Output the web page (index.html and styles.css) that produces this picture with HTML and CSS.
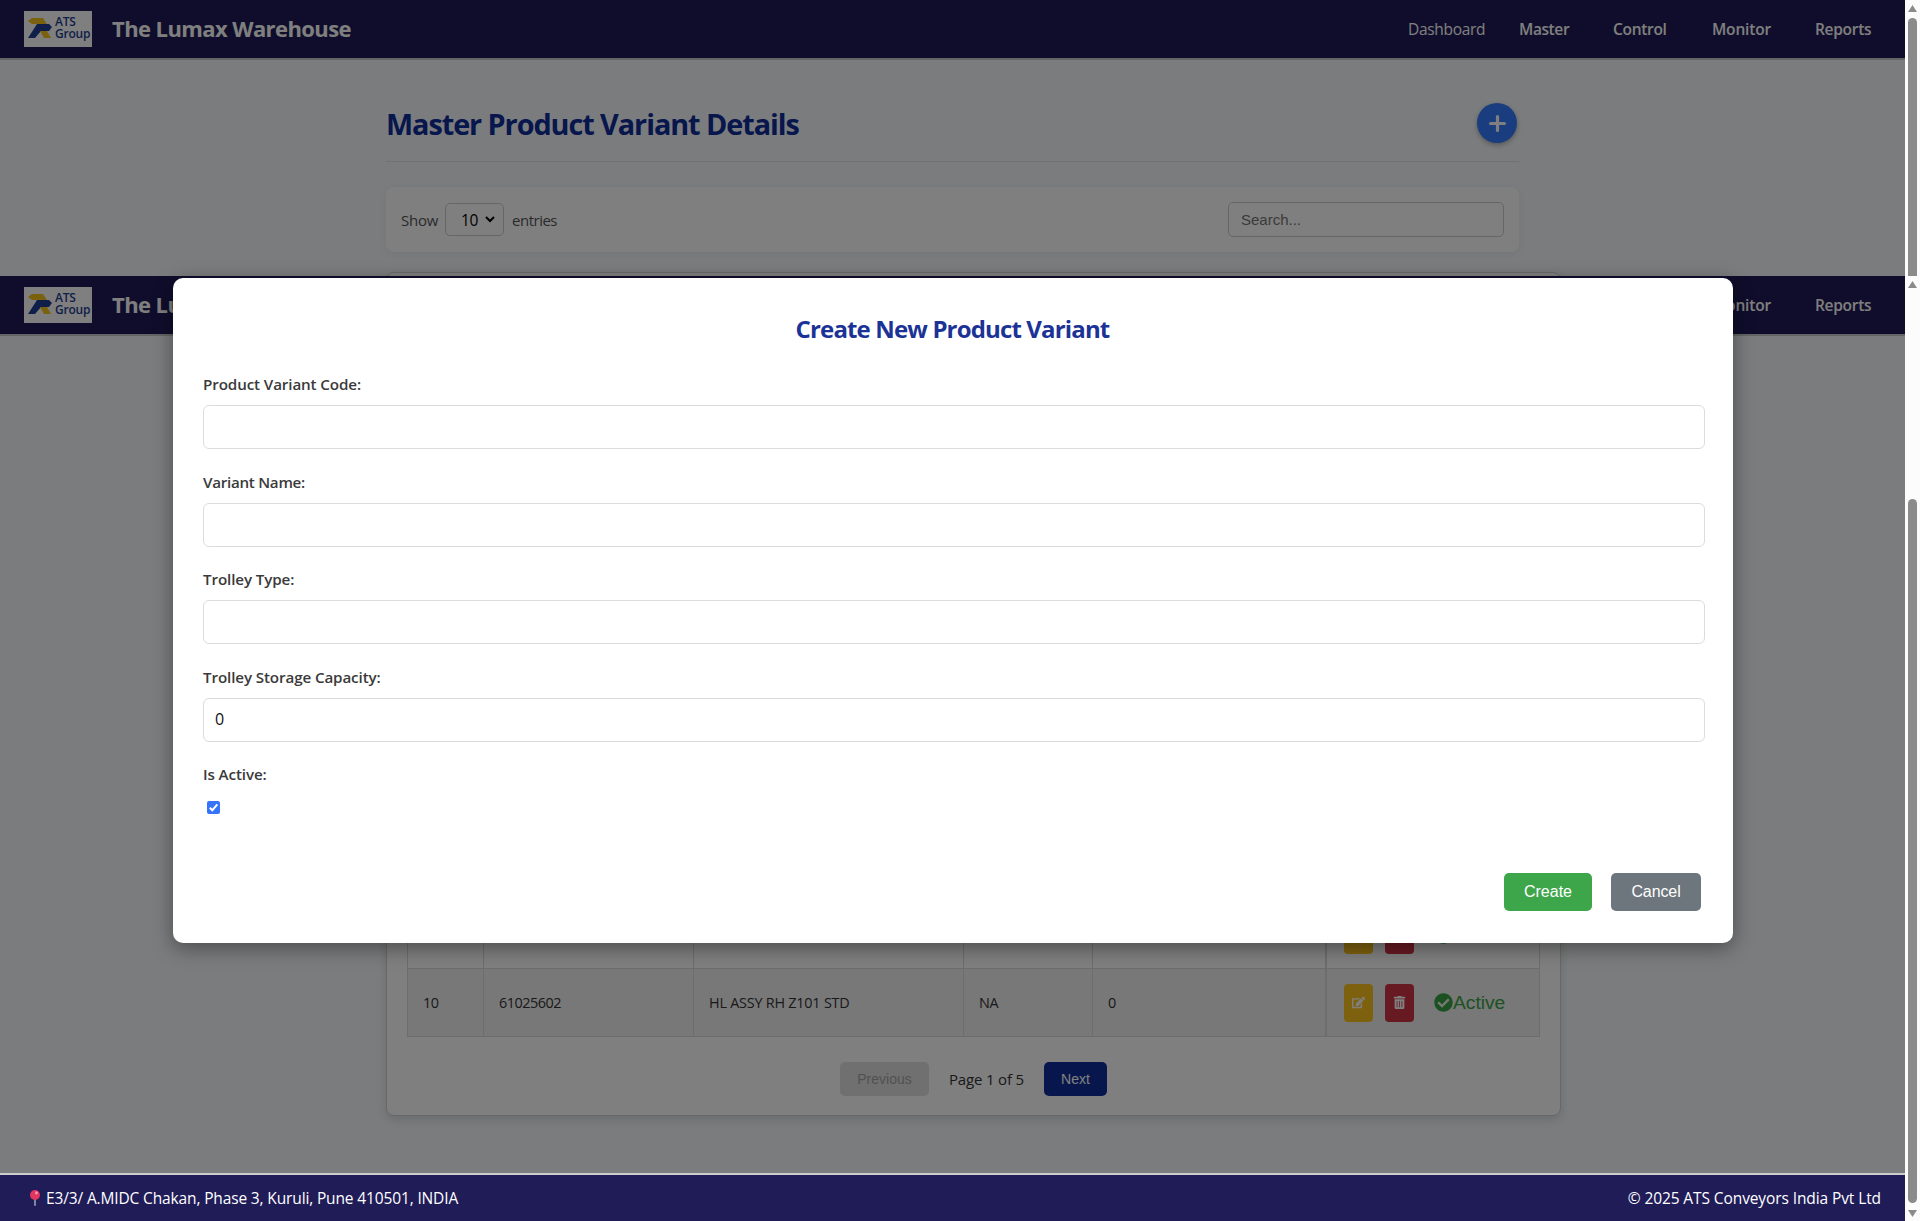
FILE: index.html
```
<!DOCTYPE html>
<html lang="en">
<head>
<meta charset="utf-8">
<title>Master Product Variant Details</title>
<link rel="stylesheet" href="styles.css">
</head>
<body>
<svg class="defs" width="0" height="0">
  <symbol id="logo" viewBox="0 0 24 20">
    <path d="M4 0h11l4 6H4L0 3z" fill="#f2c31b"/>
    <path d="M9 6h12l3 3-3 4H13l-6 7H0z" fill="#1f3f93"/>
    <path d="M12 13h7l4 7h-7z" fill="#f2c31b"/>
  </symbol>
  <symbol id="edit" viewBox="0 0 576 512">
    <path d="M402.600 83.200l90.200 90.200c3.800 3.800 3.800 10 0 13.800L274.400 405.600l-92.800 10.300c-12.400 1.400-22.900-9.100-21.500-21.500l10.300-92.800L388.800 83.200c3.800-3.800 10-3.800 13.800 0zm162-22.900l-48.800-48.800c-15.200-15.200-39.900-15.200-55.200 0l-35.400 35.400c-3.800 3.800-3.800 10 0 13.800l90.200 90.200c3.800 3.800 10 3.800 13.800 0l35.400-35.400c15.200-15.300 15.200-40 0-55.200zM384 346.200V448H64V128h229.800c3.200 0 6.200-1.300 8.500-3.500l40-40c7.600-7.600 2.200-20.500-8.500-20.500H48C21.500 64 0 85.500 0 112v352c0 26.500 21.500 48 48 48h352c26.500 0 48-21.500 48-48V306.200c0-10.700-12.900-16-20.500-8.500l-40 40c-2.200 2.300-3.500 5.300-3.500 8.500z"/>
  </symbol>
  <symbol id="trash" viewBox="0 0 448 512">
    <path d="M32 464a48 48 0 0 0 48 48h288a48 48 0 0 0 48-48V128H32zm272-256a16 16 0 0 1 32 0v224a16 16 0 0 1-32 0zm-96 0a16 16 0 0 1 32 0v224a16 16 0 0 1-32 0zm-96 0a16 16 0 0 1 32 0v224a16 16 0 0 1-32 0zM432 32H312l-9.400-18.700A24 24 0 0 0 281.100 0H166.800a23.700 23.700 0 0 0-21.400 13.300L136 32H16A16 16 0 0 0 0 48v32a16 16 0 0 0 16 16h416a16 16 0 0 0 16-16V48a16 16 0 0 0-16-16z"/>
  </symbol>
  <symbol id="check" viewBox="0 0 512 512">
    <path d="M504 256c0 137-111 248-248 248S8 393 8 256 119 8 256 8s248 111 248 248zM227.300 387.300l184-184c6.200-6.200 6.200-16.400 0-22.600l-22.600-22.600c-6.200-6.200-16.400-6.200-22.600 0L216 308.100l-70.100-70.100c-6.200-6.200-16.400-6.200-22.600 0l-22.600 22.600c-6.200 6.200-6.200 16.400 0 22.600l104 104c6.200 6.300 16.400 6.300 22.600.100z"/>
  </symbol>
</svg>

<div class="window">
  <div class="page">
    <header class="topbar">
      <div class="logo"><svg><use href="#logo"/></svg><div><span>ATS</span><span>Group</span></div></div>
      <span class="brand">The Lumax Warehouse</span>
      <nav class="menu"><a class="plain">Dashboard</a><a class="w50">Master</a><a class="w54">Control</a><a class="w59">Monitor</a><a class="w56">Reports</a></nav>
    </header>

    <main class="content">
      <div class="title-row">
        <h1>Master Product Variant Details</h1>
        <button class="add"><svg viewBox="0 0 16 16"><path d="M8 1.500v13M1.500 8h13" stroke="#fff" stroke-width="3" stroke-linecap="round"/></svg></button>
      </div>
      <div class="filters">
        <span class="show">Show</span>
        <span class="select"><span>10</span><svg viewBox="0 0 10 7"><path d="M1 1l4 4 4-4" fill="none" stroke="#000" stroke-width="2"/></svg></span>
        <span class="entries">entries</span>
        <input class="search" placeholder="Search...">
      </div>
      <section class="card">
        <div class="table">
          <div class="row">
            <div></div><div></div><div></div><div></div><div></div>
            <div class="actions">
              <button class="edit"><svg><use href="#edit"/></svg></button>
              <button class="delete"><svg><use href="#trash"/></svg></button>
              <span class="status"><svg><use href="#check"/></svg></span>
            </div>
          </div>
          <div class="row even">
            <div class="n">10</div><div class="code">61025602</div><div>HL ASSY RH Z101 STD</div><div>NA</div><div>0</div>
            <div class="actions">
              <button class="edit"><svg><use href="#edit"/></svg></button>
              <button class="delete"><svg><use href="#trash"/></svg></button>
              <span class="status"><svg><use href="#check"/></svg>Active</span>
            </div>
          </div>
        </div>
        <div class="pager"><button class="prev">Previous</button><span>Page 1 of 5</span><button class="next">Next</button></div>
      </section>
    </main>

    <header class="topbar sticky">
      <div class="logo"><svg><use href="#logo"/></svg><div><span>ATS</span><span>Group</span></div></div>
      <span class="brand">The Lumax Warehouse</span>
      <nav class="menu"><a class="plain">Dashboard</a><a class="w50">Master</a><a class="w54">Control</a><a class="w59">Monitor</a><a class="w56">Reports</a></nav>
    </header>

    <div class="backdrop"></div>

    <form class="modal">
      <h2>Create New Product Variant</h2>
      <div class="field"><label>Product Variant Code:</label><input></div>
      <div class="field"><label class="name">Variant Name:</label><input></div>
      <div class="field"><label>Trolley Type:</label><input></div>
      <div class="field"><label>Trolley Storage Capacity:</label><input value="0"></div>
      <div class="active"><label>Is Active:</label><span class="box"><svg viewBox="0 0 13 13"><path d="M2.800 6.800l2.500 2.500 5-6" fill="none" stroke="#fff" stroke-width="2"/></svg></span></div>
      <div class="buttons"><button class="create" type="button">Create</button><button class="cancel" type="button">Cancel</button></div>
    </form>

    <footer class="footer">
      <svg class="pin" viewBox="0 0 10 16"><rect x="4.200" y="8" width="1.600" height="8" rx=".8" fill="#9aa3b5"/><circle cx="5" cy="5" r="5" fill="#e0365f"/><circle cx="6.500" cy="3" r="1.400" fill="#f79ab0"/></svg>
      <span class="address">E3/3/ A.MIDC Chakan, Phase 3, Kuruli, Pune 410501, INDIA</span>
      <span class="copy">© 2025 ATS Conveyors India Pvt Ltd</span>
    </footer>
  </div>

  <div class="scrollbars">
    <svg class="arrow" viewBox="0 0 9 7"><path d="M4.500 0L9 7H0z"/></svg>
    <div class="thumb first"></div>
    <svg class="arrow second" viewBox="0 0 9 7"><path d="M4.500 0L9 7H0z"/></svg>
    <div class="thumb last"></div>
    <svg class="arrow" viewBox="0 0 9 7"><path d="M0 0h9L4.500 7z"/></svg>
  </div>
</div>
</body>
</html>
```
FILE: styles.css
```
* { box-sizing: border-box; }
body { margin: 0; font-family: "Open Sans", "Noto Sans", sans-serif; color: #333; overflow: hidden; }
button, input { font-family: "Liberation Sans", Arial, sans-serif; border: 0; padding: 0; margin: 0; }
.defs { position: absolute; }
.window { display: grid; grid-template-columns: 1905px 15px; height: 1221px; }
.page { position: relative; display: flex; flex-direction: column; height: 1221px; overflow: hidden; }

.topbar { height: 60px; flex: none; width: 100%; display: flex; align-items: center; padding: 0 34px 0 24px; background: #1f1b57; border-bottom: 2px solid #c8c8c8; color: #fff; }
.sticky { position: absolute; top: 276px; left: 0; }
.logo { width: 68px; height: 36px; flex: none; display: flex; padding: 5px 0 0 4px; background: #fff; }
.logo svg { width: 24px; height: 20px; margin-top: 2px; }
.logo div { display: flex; flex-direction: column; margin-left: 3px; }
.logo span { font-size: 12px; line-height: 12px; font-weight: 600; letter-spacing: -.2px; color: #1f3f93; }
.brand { margin-left: 20px; padding-bottom: 2px; font-size: 22px; font-weight: 700; letter-spacing: -.59px; }
.menu { margin-left: auto; display: flex; font-size: 15.5px; font-weight: 600; letter-spacing: -.3px; }
.menu a { margin-left: 43px; white-space: nowrap; }
.menu .plain { font-weight: 400; width: 77px; }
.menu .w50 { width: 51px; margin-left: 34px; letter-spacing: -.4px; }
.menu .w54 { width: 56px; }
.menu .w59 { width: 60px; letter-spacing: -.17px; }
.menu .w56 { width: 56px; }

.content { flex: 1; min-height: 0; padding: 40px 344px 0 386px; background: #f6f8fa; display: flex; flex-direction: column; }
.title-row { width: 1133px; height: 62px; flex: none; display: flex; justify-content: space-between; border-bottom: 1px solid #dfe3e7; padding-right: 2px; }
h1 { margin: 4px 0 0; font-size: 28.8px; line-height: 40px; font-weight: 700; letter-spacing: -1.05px; color: #0f2d98; white-space: nowrap; }
.add { width: 40px; height: 40px; margin-top: 3px; border-radius: 50%; background: #337afe; box-shadow: 0 2px 5px rgba(0,0,0,.3); display: grid; place-items: center; }
.add svg { width: 17px; }
.filters { width: 1133px; height: 65px; flex: none; margin-top: 25px; padding: 0 15px; display: flex; align-items: center; background: #fff; border-radius: 8px; box-shadow: 0 2px 8px rgba(0,0,0,.06); font-size: 15px; color: #555; }
.show { width: 44px; letter-spacing: -.27px; }
.select { width: 59px; height: 33px; border: 1px solid #ccc; border-radius: 5px; padding: 0 8px 0 15px; display: flex; align-items: center; justify-content: space-between; font-size: 15.5px; letter-spacing: -.4px; color: #000; }
.select svg { width: 10px; }
.entries { margin-left: 8px; letter-spacing: -.49px; }
.search { margin-left: auto; width: 276px; height: 35px; padding-left: 12px; border: 1px solid #ccc; border-radius: 5px; font-size: 15px; background: #fff; }
.search::placeholder { color: #757575; }
.card { width: 1175px; height: 844px; flex: none; margin-top: 20px; padding: 0 20px 19px; border: 1px solid #d0d0d0; border-radius: 8px; background: #fff; box-shadow: 0 4px 10px rgba(0,0,0,.12); display: flex; flex-direction: column; justify-content: flex-end; }
.table { width: 1133px; border-bottom: 1px solid #dadada; }
.row { display: grid; grid-template-columns: 76px 210px 270px 129px 233px 215px; height: 68px; font-size: 14.4px; letter-spacing: -.22px; }
.row > div { display: flex; align-items: center; padding-left: 15px; border-left: 1px solid #dadada; border-top: 1px solid #dadada; }
.row > .actions { border-left-width: 2px; border-right: 1px solid #dadada; padding-left: 17px; }
.row .n, .row .code { letter-spacing: -.48px; }
.even { background: #f0f0f0; }
.edit, .delete { width: 29px; height: 38px; border-radius: 4px; display: grid; place-items: center; }
.edit { background: #fcc31c; }
.delete { background: #cf3443; margin-left: 12px; }
.edit svg, .delete svg { width: 13px; height: 13px; fill: #fff; }
.status { display: flex; align-items: center; margin-left: 20px; color: #38a544; font: 19.2px "Liberation Sans", Arial, sans-serif; letter-spacing: 0; }
.status svg { width: 19px; height: 19px; fill: #38a544; }
.pager { display: flex; justify-content: center; align-items: center; height: 34px; margin-top: 25px; font-size: 15px; letter-spacing: -.17px; }
.pager button { height: 34px; border-radius: 5px; font-size: 14px; letter-spacing: 0; }
.pager span { width: 76px; margin: 0 19px 0 20px; white-space: nowrap; }
.prev { width: 89px; background: #e0e0e0; color: #a3a3a3; }
.next { width: 63px; background: #0f2d98; color: #fff; }

.backdrop { position: absolute; inset: 0 0 48px; background: rgba(0,0,0,.5); }

.modal { position: absolute; left: 173px; top: 278px; width: 1560px; height: 665px; padding: 32px 28px 32px 30px; border-radius: 10px; background: #fff; box-shadow: 0 5px 20px rgba(0,0,0,.4); }
h2 { margin: 0 0 24px; padding-right: 3px; text-align: center; font-size: 24px; line-height: 37px; font-weight: 700; letter-spacing: -.85px; color: #1b3297; }
.field { height: 97.600px; }
.modal label { display: block; font-size: 15.2px; line-height: 26px; font-weight: 600; letter-spacing: -.12px; color: #3a3a3a; }
.modal label.name { letter-spacing: -.28px; }
.field input { display: block; width: 1502px; height: 44px; margin-top: 8px; padding: 0 0 2px 11px; border: 1px solid #dcdcdc; border-radius: 6px; font: 16px "Open Sans", sans-serif; color: #111; }
.active { height: 111.600px; }
.box { display: block; width: 13px; height: 13px; margin: 14px 0 0 4px; border-radius: 2px; background: #3574fa; }
.box svg { display: block; }
.buttons { display: flex; justify-content: flex-end; padding-right: 4px; }
.buttons button { height: 38px; border-radius: 5px; font-size: 16px; color: #fff; }
.create { width: 88px; background: #3ea64a; }
.buttons .cancel { width: 90px; margin-left: 19px; background: #6d757d; letter-spacing: -.1px; }

.footer { position: relative; height: 48px; flex: none; display: flex; align-items: center; padding: 0 24px 0 30px; background: #1f1c58; border-top: 2px solid #ccc; color: #fff; font-size: 15.5px; white-space: nowrap; }
.pin { width: 10px; height: 16px; }
.address { margin-left: 6px; letter-spacing: -.14px; }
.copy { margin-left: auto; letter-spacing: -.1px; }

.scrollbars { background: #fcfcfc; display: flex; flex-direction: column; align-items: center; padding-top: 5px; }
.arrow { width: 9px; height: 7px; fill: #8b8b8b; flex: none; }
.thumb { width: 9px; background: #8b8b8b; flex: none; }
.first { height: 258px; margin-top: 6px; border-radius: 5px 5px 0 0; }
.second { margin-top: 5px; }
.last { height: 704px; margin: 211px 0 7px; border-radius: 5px; }
```
